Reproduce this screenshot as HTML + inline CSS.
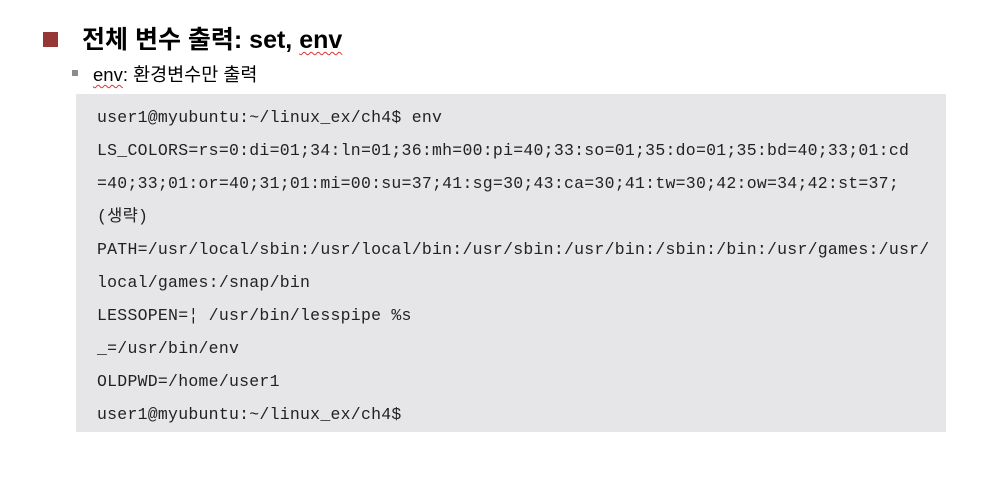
<!DOCTYPE html>
<html><head><meta charset="utf-8"><style>
body{margin:0;width:992px;height:492px;background:#fff;position:relative;overflow:hidden;font-family:"Liberation Sans","Noto Sans CJK KR",sans-serif}
.b1{position:absolute;left:43px;top:32px;width:15px;height:15px;background:#953735}
.t1{position:absolute;left:82px;top:25px;font-size:25px;font-weight:bold;line-height:30px;color:#000}
.b2{position:absolute;left:72px;top:70px;width:6px;height:6px;background:#8c8c8c}
.t2{position:absolute;left:93px;top:63px;font-size:18.5px;line-height:24px;color:#000}
.u{text-decoration:underline wavy #d33;text-decoration-thickness:1px;text-underline-offset:3px}
.box{position:absolute;left:76px;top:94px;width:870px;height:338px;background:#e6e6e8}
.code{position:absolute;left:97px;top:101px;font-family:"Liberation Mono","Noto Sans CJK KR",monospace;font-size:16.5px;letter-spacing:0.25px;line-height:33px;color:#222;white-space:pre}
</style></head><body>
<div class="b1"></div>
<div class="t1">전체 변수 출력: set, <span class="u">env</span></div>
<div class="b2"></div>
<div class="t2"><span class="u">env</span>: 환경변수만 출력</div>
<div class="box"></div>
<div class="code">user1@myubuntu:~/linux_ex/ch4$ env
LS_COLORS=rs=0:di=01;34:ln=01;36:mh=00:pi=40;33:so=01;35:do=01;35:bd=40;33;01:cd
=40;33;01:or=40;31;01:mi=00:su=37;41:sg=30;43:ca=30;41:tw=30;42:ow=34;42:st=37;
(생략)
PATH=/usr/local/sbin:/usr/local/bin:/usr/sbin:/usr/bin:/sbin:/bin:/usr/games:/usr/
local/games:/snap/bin
LESSOPEN=¦ /usr/bin/lesspipe %s
_=/usr/bin/env
OLDPWD=/home/user1
user1@myubuntu:~/linux_ex/ch4$</div>
</body></html>
